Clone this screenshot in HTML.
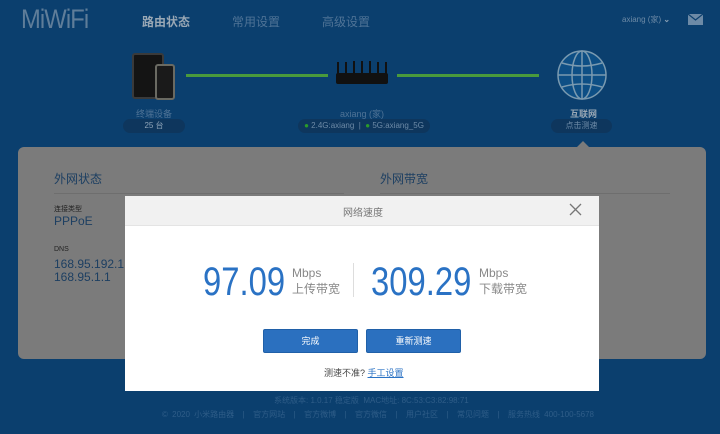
<!DOCTYPE html>
<html><head><meta charset="utf-8"><style>
*{margin:0;padding:0;box-sizing:border-box}
body{width:720px;height:434px;overflow:hidden;background:#0b3f6e;font-family:"Liberation Sans","Noto Sans CJK SC",sans-serif;position:relative}
.a{position:absolute;white-space:nowrap}
.pill{position:absolute;height:14px;border-radius:7px;background:#0e365d;color:#6d8aa6;font-size:8px;line-height:14px;text-align:center;white-space:nowrap}
.gl{position:absolute;height:3px;background:#4a9a3c;top:74px}
.num{position:absolute;color:#2a72c4;font-size:40px;line-height:40px;transform-origin:left top;transform:scaleX(.82)}
.unit{position:absolute;color:#888;font-size:12px;line-height:16px}
.btn{position:absolute;top:329px;width:95px;height:24px;background:#2b70bf;border:1px solid #2060a8;border-radius:2px;color:#fff;font-size:9px;line-height:22px;text-align:center}
</style></head><body>
<div class="a" style="left:21px;top:4px;font-size:27px;color:#5f7d99;font-weight:normal;letter-spacing:-1px;transform:scaleX(.88);transform-origin:left;-webkit-text-stroke:0">MiWiFi</div>
<div class="a" style="left:142px;top:13px;font-size:12px;color:#9aa8b5;font-weight:bold">路由状态</div>
<div class="a" style="left:232px;top:13px;font-size:12px;color:#4f7396">常用设置</div>
<div class="a" style="left:322px;top:13px;font-size:12px;color:#4f7396">高级设置</div>
<div class="a" style="left:622px;top:14px;font-size:8px;color:#6d8aa6">axiang (家) <span style="color:#8aa0b5;font-weight:bold">⌄</span></div>
<svg class="a" style="left:688px;top:14px" width="15" height="11"><rect width="15" height="11" fill="#6d8aa6"/><path d="M0 0L7.5 6L15 0" stroke="#0b3f6e" stroke-width="1.2" fill="none"/></svg>
<!-- devices -->
<div class="a" style="left:132px;top:53px;width:32px;height:46px;background:#141414;border:2px solid #3a3a3a;border-radius:3px"></div>
<div class="a" style="left:155px;top:64px;width:20px;height:36px;background:#1a1a1a;border:2px solid #6a6a62;border-radius:3px"></div>
<div class="gl" style="left:186px;width:142px"></div>
<div class="gl" style="left:397px;width:142px"></div>
<!-- router -->
<svg class="a" style="left:335px;top:60px" width="54" height="26"><g stroke="#111" stroke-width="2"><line x1="3" y1="2" x2="3" y2="14"/><line x1="11" y1="2" x2="11" y2="14"/><line x1="19" y1="1" x2="19" y2="14"/><line x1="27" y1="1" x2="27" y2="14"/><line x1="35" y1="1" x2="35" y2="14"/><line x1="43" y1="2" x2="43" y2="14"/><line x1="51" y1="2" x2="51" y2="14"/></g><rect x="1" y="13" width="52" height="11" rx="2" fill="#111"/></svg>
<!-- globe -->
<svg class="a" style="left:556px;top:49px" width="52" height="52"><g fill="none" stroke="#7a9ab0" stroke-width="1.5"><circle cx="26" cy="26" r="24" fill="#0e4f85"/><ellipse cx="26" cy="26" rx="10" ry="24"/><line x1="26" y1="2" x2="26" y2="50"/><line x1="2" y1="26" x2="50" y2="26"/><path d="M6 14Q26 20 46 14M6 38Q26 32 46 38"/></g></svg>
<div class="a" style="left:136px;top:107px;font-size:9px;color:#4f7396">终端设备</div>
<div class="pill" style="left:123px;top:119px;width:62px;color:#8fa4b8">25 台</div>
<div class="a" style="left:340px;top:107px;font-size:9px;color:#4f7396">axiang (家)</div>
<div class="pill" style="left:298px;top:119px;width:132px"><span style="color:#2a9a2a">●</span> 2.4G:axiang &nbsp;| &nbsp;<span style="color:#2a9a2a">●</span> 5G:axiang_5G</div>
<div class="a" style="left:570px;top:107px;font-size:9px;color:#9aa8b5;font-weight:bold">互联网</div>
<div class="pill" style="left:551px;top:119px;width:61px">点击测速</div>
<!-- panel -->
<div class="a" style="left:577px;top:141px;width:0;height:0;border:6px solid transparent;border-bottom-color:#7b7b7b;border-top:0"></div>
<div class="a" style="left:18px;top:147px;width:688px;height:212px;background:#7b7b7b;border-radius:6px"></div>
<div class="a" style="left:54px;top:170px;font-size:12px;color:#1d3f62">外网状态</div>
<div class="a" style="left:380px;top:170px;font-size:12px;color:#1d3f62">外网带宽</div>
<div class="a" style="left:54px;top:193px;width:290px;height:1px;background:#6e6e6e"></div>
<div class="a" style="left:380px;top:193px;width:290px;height:1px;background:#6e6e6e"></div>
<div class="a" style="left:54px;top:204px;font-size:7px;color:#222">连接类型</div>
<div class="a" style="left:54px;top:214px;font-size:12px;color:#1d3f62">PPPoE</div>
<div class="a" style="left:54px;top:246px;font-size:7px;color:#222">DNS</div>
<div class="a" style="left:54px;top:258px;font-size:12px;line-height:13px;color:#1d3f62">168.95.192.1<br>168.95.1.1</div>
<!-- modal -->
<div class="a" style="left:125px;top:196px;width:474px;height:195px;background:#fff"></div>
<div class="a" style="left:125px;top:196px;width:474px;height:30px;background:#f1f1f1;border-bottom:1px solid #e4e4e4"></div>
<div class="a" style="left:343px;top:204px;font-size:10px;color:#777">网络速度</div>
<svg class="a" style="left:569px;top:203px" width="13" height="13"><path d="M1 1L12 12M12 1L1 12" stroke="#777" stroke-width="1.3"/></svg>
<div class="num" style="left:203px;top:262px">97.09</div>
<div class="unit" style="left:292px;top:265px">Mbps<br>上传带宽</div>
<div class="a" style="left:353px;top:263px;width:1px;height:34px;background:#ddd"></div>
<div class="num" style="left:371px;top:262px">309.29</div>
<div class="unit" style="left:479px;top:265px">Mbps<br>下载带宽</div>
<div class="btn" style="left:263px">完成</div>
<div class="btn" style="left:366px">重新测速</div>
<div class="a" style="left:324px;top:366px;font-size:9px;color:#444">测速不准? <span style="color:#2a72c4;text-decoration:underline">手工设置</span></div>
<div class="a" style="left:274px;top:395px;font-size:8px;color:#2f5d88">系统版本: 1.0.17 稳定版 &nbsp;MAC地址: 8C:53:C3:82:98:71</div>
<div class="a" style="left:162px;top:409px;font-size:8px;color:#2f5d88;word-spacing:2px">© 2020 小米路由器 &nbsp;| &nbsp;官方网站 &nbsp;| &nbsp;官方微博 &nbsp;| &nbsp;官方微信 &nbsp;| &nbsp;用户社区 &nbsp;| &nbsp;常见问题 &nbsp;| &nbsp;服务热线 400-100-5678</div>
</body></html>
